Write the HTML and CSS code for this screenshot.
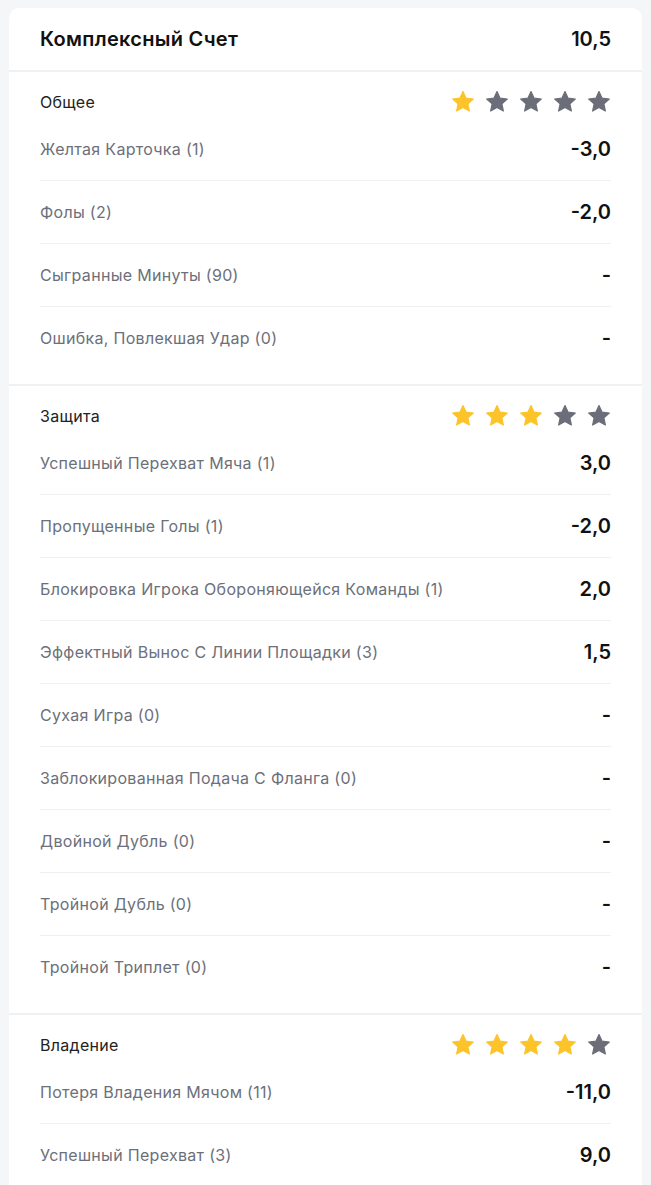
FILE: index.html
```html
<!DOCTYPE html>
<html lang="ru">

<head>
  <meta charset="UTF-8" />
  <meta name="viewport" content="width=device-width, initial-scale=1.0" />
  <title>Комплексный Счет</title>
  <link rel="stylesheet" href="styles.css">
</head>

<body>
  <svg width="0" height="0" class="defs">
    <defs>
      <symbol id="star" viewBox="0 0 24 24">
        <path d="M12 1.6l3.1 6.6 7.2.8-5.4 4.9 1.5 7.1L12 17.4 5.6 21l1.5-7.1L1.7 9l7.2-.8z" stroke-linejoin="round" stroke-width="1.2" />
      </symbol>
    </defs>
  </svg>

  <div class="card">
    <div class="card-header">
      <span>Комплексный Счет</span>
      <span class="total">10,5</span>
    </div>

    <div class="section">
      <div class="section-head">
        <span>Общее</span>
        <div class="stars">
          <svg class="star on"><use href="#star" /></svg>
          <svg class="star"><use href="#star" /></svg>
          <svg class="star"><use href="#star" /></svg>
          <svg class="star"><use href="#star" /></svg>
          <svg class="star"><use href="#star" /></svg>
        </div>
      </div>
      <div class="row"><span class="label">Желтая Карточка (1)</span><span class="value">-3,0</span></div>
      <div class="row"><span class="label">Фолы (2)</span><span class="value">-2,0</span></div>
      <div class="row"><span class="label">Сыгранные Минуты (90)</span><span class="value">-</span></div>
      <div class="row"><span class="label">Ошибка, Повлекшая Удар (0)</span><span class="value">-</span></div>
    </div>

    <div class="section">
      <div class="section-head">
        <span>Защита</span>
        <div class="stars">
          <svg class="star on"><use href="#star" /></svg>
          <svg class="star on"><use href="#star" /></svg>
          <svg class="star on"><use href="#star" /></svg>
          <svg class="star"><use href="#star" /></svg>
          <svg class="star"><use href="#star" /></svg>
        </div>
      </div>
      <div class="row"><span class="label">Успешный Перехват Мяча (1)</span><span class="value">3,0</span></div>
      <div class="row"><span class="label">Пропущенные Голы (1)</span><span class="value">-2,0</span></div>
      <div class="row"><span class="label">Блокировка Игрока Обороняющейся Команды (1)</span><span class="value">2,0</span></div>
      <div class="row"><span class="label">Эффектный Вынос С Линии Площадки (3)</span><span class="value">1,5</span></div>
      <div class="row"><span class="label">Сухая Игра (0)</span><span class="value">-</span></div>
      <div class="row"><span class="label">Заблокированная Подача С Фланга (0)</span><span class="value">-</span></div>
      <div class="row"><span class="label">Двойной Дубль (0)</span><span class="value">-</span></div>
      <div class="row"><span class="label">Тройной Дубль (0)</span><span class="value">-</span></div>
      <div class="row"><span class="label">Тройной Триплет (0)</span><span class="value">-</span></div>
    </div>

    <div class="section">
      <div class="section-head">
        <span>Владение</span>
        <div class="stars">
          <svg class="star on"><use href="#star" /></svg>
          <svg class="star on"><use href="#star" /></svg>
          <svg class="star on"><use href="#star" /></svg>
          <svg class="star on"><use href="#star" /></svg>
          <svg class="star"><use href="#star" /></svg>
        </div>
      </div>
      <div class="row"><span class="label">Потеря Владения Мячом (11)</span><span class="value">-11,0</span></div>
      <div class="row"><span class="label">Успешный Перехват (3)</span><span class="value">9,0</span></div>
    </div>
  </div>
</body>

</html>
```

FILE: styles.css
```css
body {
  font-family: Inter, "Noto Sans", sans-serif;
  margin: 0;
  padding: 8px 9px 0;
  background-color: #f5f6f8;
  color: #111;
}

.defs {
  position: absolute;
}

.card {
  background-color: #fff;
  border-radius: 10px 10px 0 0;
  overflow: hidden;
}

.card-header {
  display: flex;
  justify-content: space-between;
  align-items: center;
  height: 62px;
  padding: 0 31px;
  font-size: 20px;
  font-weight: 600;
  letter-spacing: 0.3px;
}

.card-header .total {
  letter-spacing: 0;
}

.section {
  border-top: 2px solid #f0f1f4;
  padding: 14px 31px 15px;
}

.section-head {
  display: flex;
  justify-content: space-between;
  align-items: center;
  height: 32px;
  font-size: 16px;
  letter-spacing: 0.3px;
  color: #222;
}

.stars {
  display: flex;
  gap: 10px;
}

.star {
  width: 24px;
  height: 24px;
  fill: #6b6e78;
  stroke: #6b6e78;
}

.star.on {
  fill: #fcc42a;
  stroke: #fcc42a;
}

/* stat rows */
.row {
  display: flex;
  justify-content: space-between;
  align-items: center;
  padding: 20px 0;
  line-height: 22px;
  border-bottom: 1px solid #eef0f3;
}

.row:last-child {
  border-bottom: none;
}

.label {
  font-size: 16px;
  letter-spacing: 0.3px;
  color: #6c707a;
}

.value {
  font-size: 20px;
  font-weight: 600;
  color: #111;
}
```
